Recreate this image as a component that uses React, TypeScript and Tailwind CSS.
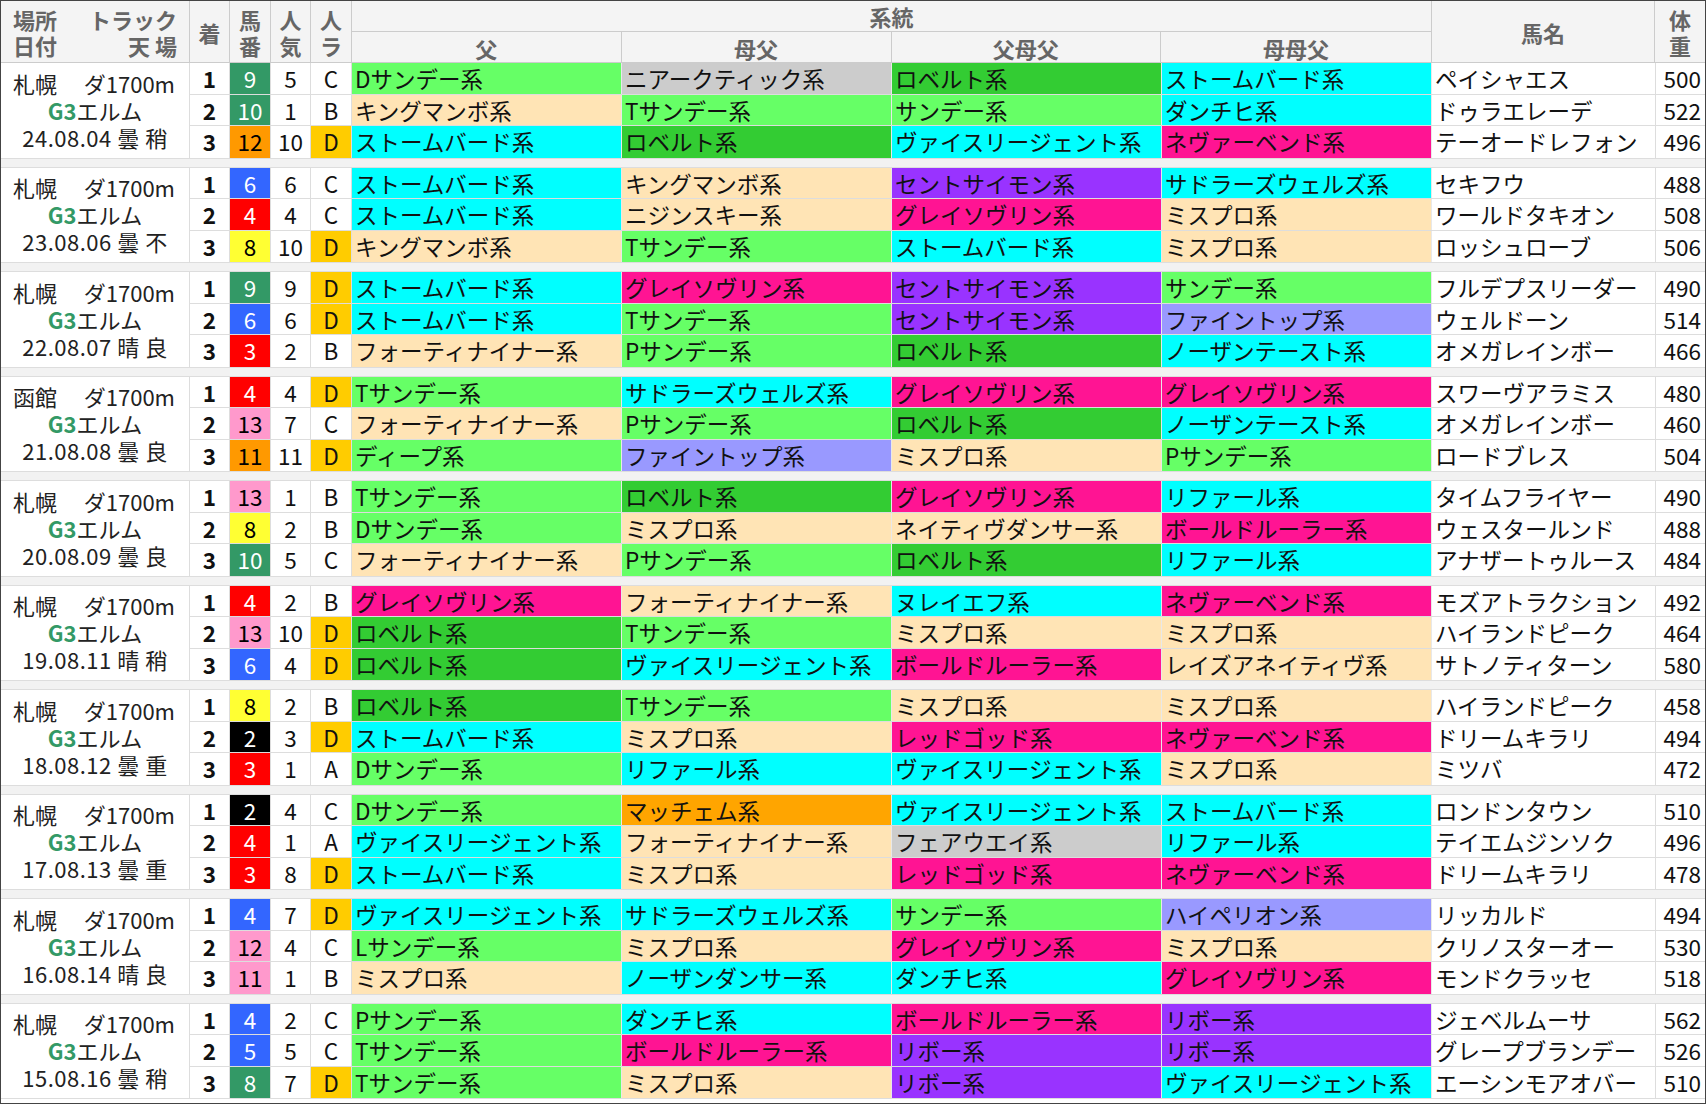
import React from "react";

const C: Record<string, string> = {
  G: "bg-[#66ff66]", g: "bg-[#33cc33]", c: "bg-[#00ffff]", p: "bg-[#ffe4b5]", k: "bg-[#ff1493]",
  u: "bg-[#9933ff]", l: "bg-[#9999ff]", y: "bg-[#cccccc]", o: "bg-[#ffa500]",
};
const W: Record<string, string> = {
  gr: "bg-[#339966] text-white", or: "bg-[#ff9900] text-black", bl: "bg-[#3366ff] text-white",
  rd: "bg-[#ff0000] text-white", ye: "bg-[#ffff33] text-black", pk: "bg-[#ff99cc] text-black", bk: "bg-black text-white",
};
type Row = [string, string, string, string, string, [string, string][], string, string];
type Group = { place: string; date: string; w: string; b: string; rows: Row[] };

const groups: Group[] = [
  { place: "札幌", date: "24.08.04", w: "曇", b: "稍", rows: [
    ["1", "9", "gr", "5", "C", [["Dサンデー系", "G"], ["ニアークティック系", "y"], ["ロベルト系", "g"], ["ストームバード系", "c"]], "ペイシャエス", "500"],
    ["2", "10", "gr", "1", "B", [["キングマンボ系", "p"], ["Tサンデー系", "G"], ["サンデー系", "G"], ["ダンチヒ系", "c"]], "ドゥラエレーデ", "522"],
    ["3", "12", "or", "10", "D", [["ストームバード系", "c"], ["ロベルト系", "g"], ["ヴァイスリージェント系", "c"], ["ネヴァーベンド系", "k"]], "テーオードレフォン", "496"],
  ]},
  { place: "札幌", date: "23.08.06", w: "曇", b: "不", rows: [
    ["1", "6", "bl", "6", "C", [["ストームバード系", "c"], ["キングマンボ系", "p"], ["セントサイモン系", "u"], ["サドラーズウェルズ系", "c"]], "セキフウ", "488"],
    ["2", "4", "rd", "4", "C", [["ストームバード系", "c"], ["ニジンスキー系", "p"], ["グレイソヴリン系", "k"], ["ミスプロ系", "p"]], "ワールドタキオン", "508"],
    ["3", "8", "ye", "10", "D", [["キングマンボ系", "p"], ["Tサンデー系", "G"], ["ストームバード系", "c"], ["ミスプロ系", "p"]], "ロッシュローブ", "506"],
  ]},
  { place: "札幌", date: "22.08.07", w: "晴", b: "良", rows: [
    ["1", "9", "gr", "9", "D", [["ストームバード系", "c"], ["グレイソヴリン系", "k"], ["セントサイモン系", "u"], ["サンデー系", "G"]], "フルデプスリーダー", "490"],
    ["2", "6", "bl", "6", "D", [["ストームバード系", "c"], ["Tサンデー系", "G"], ["セントサイモン系", "u"], ["ファイントップ系", "l"]], "ウェルドーン", "514"],
    ["3", "3", "rd", "2", "B", [["フォーティナイナー系", "p"], ["Pサンデー系", "G"], ["ロベルト系", "g"], ["ノーザンテースト系", "c"]], "オメガレインボー", "466"],
  ]},
  { place: "函館", date: "21.08.08", w: "曇", b: "良", rows: [
    ["1", "4", "rd", "4", "D", [["Tサンデー系", "G"], ["サドラーズウェルズ系", "c"], ["グレイソヴリン系", "k"], ["グレイソヴリン系", "k"]], "スワーヴアラミス", "480"],
    ["2", "13", "pk", "7", "C", [["フォーティナイナー系", "p"], ["Pサンデー系", "G"], ["ロベルト系", "g"], ["ノーザンテースト系", "c"]], "オメガレインボー", "460"],
    ["3", "11", "or", "11", "D", [["ディープ系", "G"], ["ファイントップ系", "l"], ["ミスプロ系", "p"], ["Pサンデー系", "G"]], "ロードブレス", "504"],
  ]},
  { place: "札幌", date: "20.08.09", w: "曇", b: "良", rows: [
    ["1", "13", "pk", "1", "B", [["Tサンデー系", "G"], ["ロベルト系", "g"], ["グレイソヴリン系", "k"], ["リファール系", "c"]], "タイムフライヤー", "490"],
    ["2", "8", "ye", "2", "B", [["Dサンデー系", "G"], ["ミスプロ系", "p"], ["ネイティヴダンサー系", "p"], ["ボールドルーラー系", "k"]], "ウェスタールンド", "488"],
    ["3", "10", "gr", "5", "C", [["フォーティナイナー系", "p"], ["Pサンデー系", "G"], ["ロベルト系", "g"], ["リファール系", "c"]], "アナザートゥルース", "484"],
  ]},
  { place: "札幌", date: "19.08.11", w: "晴", b: "稍", rows: [
    ["1", "4", "rd", "2", "B", [["グレイソヴリン系", "k"], ["フォーティナイナー系", "p"], ["ヌレイエフ系", "c"], ["ネヴァーベンド系", "k"]], "モズアトラクション", "492"],
    ["2", "13", "pk", "10", "D", [["ロベルト系", "g"], ["Tサンデー系", "G"], ["ミスプロ系", "p"], ["ミスプロ系", "p"]], "ハイランドピーク", "464"],
    ["3", "6", "bl", "4", "D", [["ロベルト系", "g"], ["ヴァイスリージェント系", "c"], ["ボールドルーラー系", "k"], ["レイズアネイティヴ系", "p"]], "サトノティターン", "580"],
  ]},
  { place: "札幌", date: "18.08.12", w: "曇", b: "重", rows: [
    ["1", "8", "ye", "2", "B", [["ロベルト系", "g"], ["Tサンデー系", "G"], ["ミスプロ系", "p"], ["ミスプロ系", "p"]], "ハイランドピーク", "458"],
    ["2", "2", "bk", "3", "D", [["ストームバード系", "c"], ["ミスプロ系", "p"], ["レッドゴッド系", "k"], ["ネヴァーベンド系", "k"]], "ドリームキラリ", "494"],
    ["3", "3", "rd", "1", "A", [["Dサンデー系", "G"], ["リファール系", "c"], ["ヴァイスリージェント系", "c"], ["ミスプロ系", "p"]], "ミツバ", "472"],
  ]},
  { place: "札幌", date: "17.08.13", w: "曇", b: "重", rows: [
    ["1", "2", "bk", "4", "C", [["Dサンデー系", "G"], ["マッチェム系", "o"], ["ヴァイスリージェント系", "c"], ["ストームバード系", "c"]], "ロンドンタウン", "510"],
    ["2", "4", "rd", "1", "A", [["ヴァイスリージェント系", "c"], ["フォーティナイナー系", "p"], ["フェアウエイ系", "y"], ["リファール系", "c"]], "テイエムジンソク", "496"],
    ["3", "3", "rd", "8", "D", [["ストームバード系", "c"], ["ミスプロ系", "p"], ["レッドゴッド系", "k"], ["ネヴァーベンド系", "k"]], "ドリームキラリ", "478"],
  ]},
  { place: "札幌", date: "16.08.14", w: "晴", b: "良", rows: [
    ["1", "4", "bl", "7", "D", [["ヴァイスリージェント系", "c"], ["サドラーズウェルズ系", "c"], ["サンデー系", "G"], ["ハイペリオン系", "l"]], "リッカルド", "494"],
    ["2", "12", "pk", "4", "C", [["Lサンデー系", "G"], ["ミスプロ系", "p"], ["グレイソヴリン系", "k"], ["ミスプロ系", "p"]], "クリノスターオー", "530"],
    ["3", "11", "pk", "1", "B", [["ミスプロ系", "p"], ["ノーザンダンサー系", "c"], ["ダンチヒ系", "c"], ["グレイソヴリン系", "k"]], "モンドクラッセ", "518"],
  ]},
  { place: "札幌", date: "15.08.16", w: "曇", b: "稍", rows: [
    ["1", "4", "bl", "2", "C", [["Pサンデー系", "G"], ["ダンチヒ系", "c"], ["ボールドルーラー系", "k"], ["リボー系", "u"]], "ジェベルムーサ", "562"],
    ["2", "5", "bl", "5", "C", [["Tサンデー系", "G"], ["ボールドルーラー系", "k"], ["リボー系", "u"], ["リボー系", "u"]], "グレープブランデー", "526"],
    ["3", "8", "gr", "7", "D", [["Tサンデー系", "G"], ["ミスプロ系", "p"], ["リボー系", "u"], ["ヴァイスリージェント系", "c"]], "エーシンモアオバー", "510"],
  ]},
];

const font = { fontFamily: '"Noto Sans CJK JP", "Noto Sans", sans-serif' };

function GroupBlock({ g }: { g: Group }) {
  return (
    <div className="flex border-b border-[#dddddd]">
      <div className="w-[189px] shrink-0 border-r border-[#dddddd] flex flex-col items-center justify-center text-[22px] leading-[27px] text-[#222]">
        <div className="w-full flex justify-between pl-[12px] pr-[14px]"><span>{g.place}</span><span>ダ1700m</span></div>
        <div><span className="text-[#339966] font-bold">G3</span>エルム</div>
        <div className="tracking-[0.5px]">{g.date} {g.w} {g.b}</div>
      </div>
      <div className="flex-1 flex flex-col">
        {g.rows.map((r, i) => (
          <div key={i} className={`flex h-[31.5px] text-[22.5px] leading-[31px] ${i < 2 ? "border-b border-[#dddddd]" : ""}`}>
            <div className="w-[40px] border-r border-[#dddddd] text-center font-bold">{r[0]}</div>
            <div className={`w-[41px] border-r border-[#dddddd] text-center ${W[r[2]]}`}>{r[1]}</div>
            <div className="w-[40px] border-r border-[#dddddd] text-center">{r[3]}</div>
            <div className={`w-[41px] border-r border-[#dddddd] text-center ${r[4] === "D" ? "bg-[#ffcc00]" : ""}`}>{r[4]}</div>
            {r[5].map(([t, c], j) => (
              <div key={j} className={`w-[270px] border-r border-[#e8e8e8] pl-[3px] whitespace-nowrap overflow-hidden ${C[c]}`}>{t}</div>
            ))}
            <div className="w-[224px] border-r border-[#dddddd] pl-[3px] whitespace-nowrap overflow-hidden">{r[6]}</div>
            <div className="flex-1 text-right pr-[4px]">{r[7]}</div>
          </div>
        ))}
      </div>
    </div>
  );
}

export default function App() {
  const hd = "text-[#666] font-bold text-[22px] leading-[26px]";
  return (
    <div style={font} className="w-[1706px] h-[1108px] bg-white text-[#111] overflow-hidden">
      <div className="border border-[#444] h-[1104px] overflow-hidden">
        <div className={`flex h-[62px] bg-[#f4f4f4] border-b border-[#cccccc] ${hd}`}>
          <div className="w-[189px] border-r border-[#cccccc] px-[12px] flex flex-col justify-center">
            <div className="flex justify-between"><span>場所</span><span>トラック</span></div>
            <div className="flex justify-between"><span>日付</span><span>天 場</span></div>
          </div>
          <div className="w-[40px] border-r border-[#cccccc] flex items-center justify-center">着</div>
          <div className="w-[41px] border-r border-[#cccccc] flex flex-col items-center justify-center"><span>馬</span><span>番</span></div>
          <div className="w-[40px] border-r border-[#cccccc] flex flex-col items-center justify-center"><span>人</span><span>気</span></div>
          <div className="w-[41px] border-r border-[#cccccc] flex flex-col items-center justify-center"><span>人</span><span>ラ</span></div>
          <div className="w-[1080px] border-r border-[#cccccc] flex flex-col">
            <div className="h-[31px] border-b border-[#cccccc] flex items-center justify-center">系統</div>
            <div className="flex-1 flex">
              {["父", "母父", "父母父", "母母父"].map((t) => (
                <div key={t} className="w-[270px] border-r border-[#cccccc] last:border-r-0 flex items-end justify-center pb-[1px]">{t}</div>
              ))}
            </div>
          </div>
          <div className="w-[223px] border-r border-[#cccccc] flex items-center justify-center">馬名</div>
          <div className="flex-1 flex flex-col items-center justify-center"><span>体</span><span>重</span></div>
        </div>
        {groups.map((g, i) => (
          <React.Fragment key={i}>
            {i > 0 && <div className="h-[9px] bg-[#f2f2f2] border-b border-[#dddddd]" />}
            <GroupBlock g={g} />
          </React.Fragment>
        ))}
      </div>
    </div>
  );
}
